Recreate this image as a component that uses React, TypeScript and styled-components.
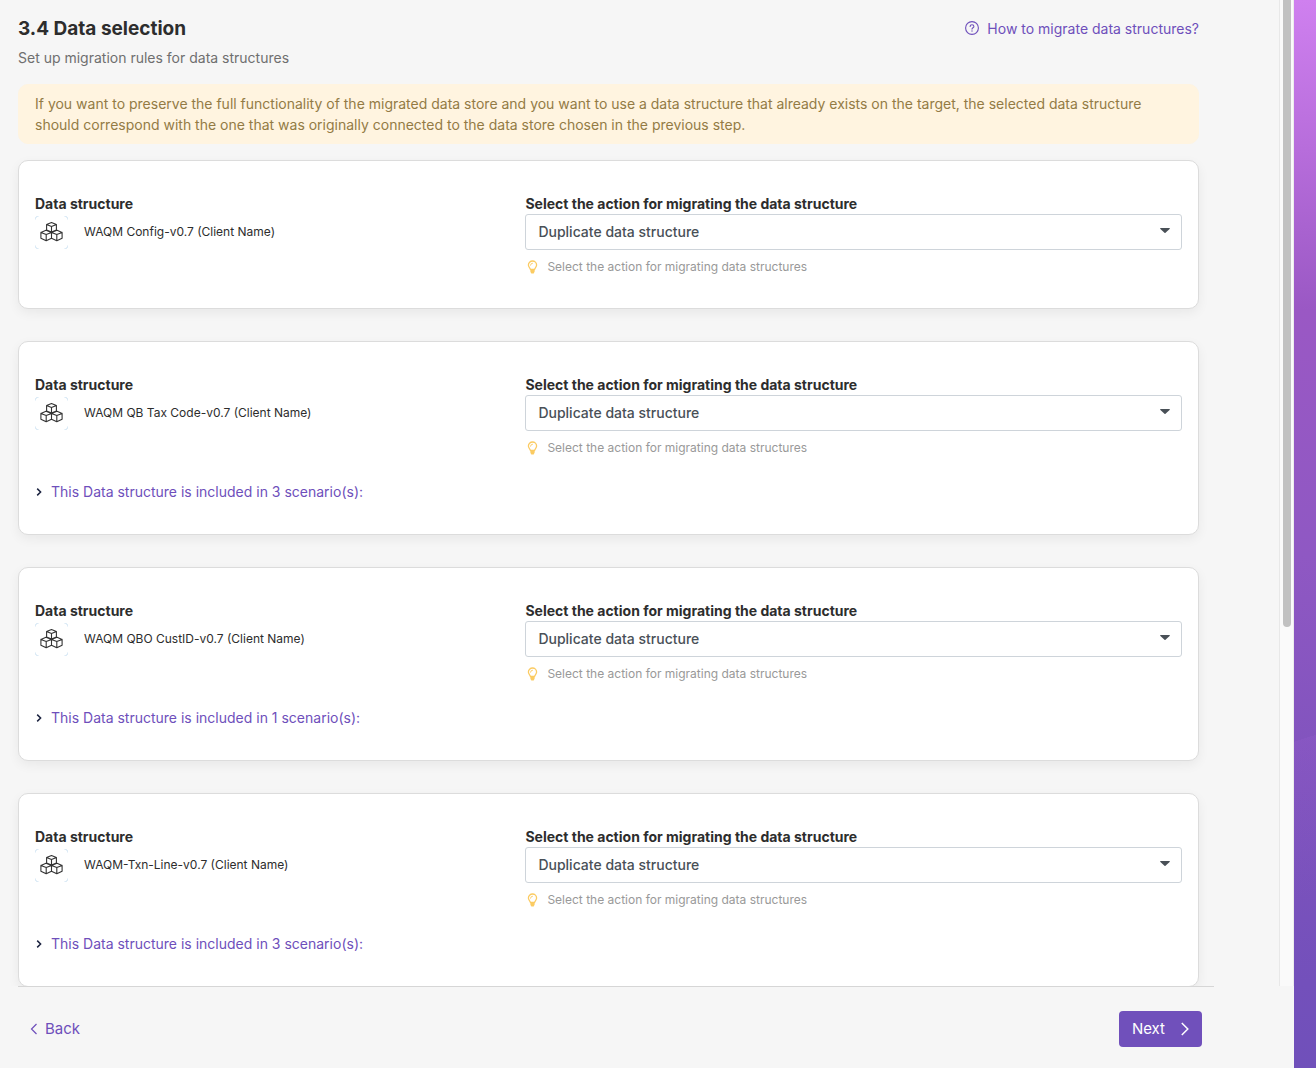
import React, { useId, useState } from "react";
import styled, { createGlobalStyle } from "styled-components";

const GlobalStyle = createGlobalStyle`
  *, *::before, *::after { box-sizing: border-box; }
  body {
    margin: 0;
    background: #f6f6f6;
    color: #2d2d2d;
    font-family: Inter, "Liberation Sans", sans-serif;
    font-size: 14px;
    line-height: 21px;
  }
  h1, p { margin: 0; }
  button, select { font-family: inherit; }
`;

const Page = styled.div`
  display: grid;
  grid-template-columns: minmax(0, 1fr) 22px;
  height: 100vh;
`;

const Wizard = styled.div`
  display: flex;
  flex-direction: column;
  min-height: 0;
`;

const Viewport = styled.div`
  flex: 1;
  min-height: 0;
  display: flex;
`;

const Content = styled.main`
  flex: 1;
  min-width: 0;
  overflow-y: auto;
  scrollbar-width: none;
  padding: 13px 80px 32px 18px;
`;

const ScrollTrack = styled.div`
  width: 15px;
  padding: 0 2px 0 3px;
  background: #fafafa;
  border-left: 1px solid #e8e8e8;
  border-right: 1px solid #ececec;
`;

const ScrollThumb = styled.div<{ $share: number }>`
  width: 8px;
  height: ${(p) => p.$share * 100}%;
  border-radius: 0 0 4px 4px;
  background: #c1c1c1;
`;

const Backdrop = styled.div`
  background:
    linear-gradient(162deg, transparent 69%, rgba(160, 100, 215, 0.16) 69%, transparent 84%),
    linear-gradient(180deg, #cf80ef 0%, #b76ddb 14%, #9a58c4 29%, #8f58c3 52%, #7f53bd 74%, #7350bb 92%, #7050ba 100%);
`;

const Header = styled.header`
  display: flex;
  justify-content: space-between;
  align-items: flex-start;
  margin-bottom: 16px;
`;

const Title = styled.h1`
  font-size: 19px;
  line-height: 32px;
  font-weight: 700;
`;

const Subtitle = styled.p`
  padding-top: 2px;
  color: #6f6f6f;
`;

const HelpLink = styled.a`
  display: flex;
  align-items: center;
  gap: 8px;
  line-height: 32px;
  color: #6e4fbb;
  text-decoration: none;
`;

const Notice = styled.p`
  && { margin-bottom: 16px; }
  padding: 8px 16px;
  border: 1px solid #fff4e0;
  border-radius: 10px;
  background: #fff4e0;
  color: #937b45;
`;

const CardList = styled.div`
  display: flex;
  flex-direction: column;
  gap: 32px;
`;

const Card = styled.section`
  padding: 32px 16px;
  border: 1px solid #dcdcdc;
  border-radius: 10px;
  background: #fff;
  box-shadow: 0 4px 12px rgba(0, 0, 0, 0.06);
`;

const Columns = styled.div`
  display: grid;
  grid-template-columns: repeat(12, minmax(0, 1fr));
  column-gap: 30px;
`;

const Column = styled.div<{ $span: number }>`
  grid-column: span ${(p) => p.$span};
`;

const Caption = styled.div`
  font-weight: 700;
`;

const FieldLabel = styled.label`
  display: block;
  font-weight: 700;
`;

const Structure = styled.div`
  display: flex;
  align-items: flex-start;
  gap: 16px;
  padding-top: 2px;
  font-size: 12px;
  line-height: 32px;
`;

const SelectBox = styled.div`
  position: relative;
`;

const Select = styled.select`
  display: block;
  width: 100%;
  height: 36px;
  padding: 0 36px 2px 12px;
  border: 1px solid #ced4da;
  border-radius: 3px;
  background: #fff;
  color: #495057;
  font-size: 14px;
  font-weight: 500;
  appearance: none;
`;

const Caret = styled.svg`
  position: absolute;
  top: 14px;
  right: 12px;
  pointer-events: none;
`;

const Hint = styled.p`
  && { margin-top: 8px; }
  display: flex;
  align-items: center;
  gap: 8px;
  color: #999;
  font-size: 12px;
  line-height: 18px;
`;

const Disclosure = styled.button`
  display: flex;
  align-items: center;
  gap: 8px;
  margin-top: 24px;
  padding: 0;
  border: 0;
  background: none;
  color: #6e4fbb;
  font-size: 14px;
  line-height: 21px;
  cursor: pointer;
`;

const Arrow = styled.svg<{ $open: boolean }>`
  transform: ${(p) => (p.$open ? "rotate(90deg)" : "none")};
`;

const Footer = styled.footer`
  display: flex;
  justify-content: space-between;
  align-items: center;
  margin: 0 80px 0 18px;
  padding: 24px 12px 21px;
  border-top: 1px solid #d6d6d6;
`;

const BackButton = styled.button`
  display: flex;
  align-items: center;
  gap: 7px;
  padding: 0;
  border: 0;
  background: none;
  color: #6e4fbb;
  font-size: 15px;
  line-height: 24px;
  cursor: pointer;
`;

const NextButton = styled.button`
  display: flex;
  align-items: center;
  gap: 16px;
  height: 36px;
  padding: 0 13px 1px;
  border: 0;
  border-radius: 4px;
  background: #7050bb;
  color: #fff;
  font-size: 15px;
  line-height: 24px;
  cursor: pointer;
`;

const QuestionIcon = () => (
  <svg width="14" height="16" viewBox="0 0 14 16" fill="none" stroke="currentColor" strokeLinecap="round" strokeLinejoin="round" aria-hidden="true">
    <circle cx="7" cy="7" r="6.4" strokeWidth="1.1" />
    <path d="M5.1 5.4C5.2 4.3 6 3.7 7 3.7s1.9.7 1.9 1.7c0 1.3-1.9 1.4-1.9 2.7" strokeWidth="1.1" />
    <circle cx="7" cy="10" r=".7" fill="currentColor" stroke="none" />
  </svg>
);

const CubesIcon = () => (
  <svg width="33" height="33" viewBox="0 0 33 33" fill="none" strokeLinejoin="round" strokeLinecap="round" aria-hidden="true">
    <path d="M.5 3v-.5a2 2 0 0 1 2-2H3M30 .5h.5a2 2 0 0 1 2 2V3M.5 30v.5a2 2 0 0 0 2 2H3M30 32.5h.5a2 2 0 0 0 2-2V30" stroke="#cfe3f2" />
    <path
      d="M16.5 6.6l4.9 1.9v5.4l-4.9 2.2-4.9-2.2V8.5zM11.6 8.5l4.9 2 4.9-2M16.5 10.5v5.6M11 14.2l5.5 2.2v5.9l-5.3 2.5-5.3-2.5v-5.9zM5.9 16.4l5.3 2.2 5.3-2.2M11.2 18.6v6.2M22 14.2l5.1 2.2v5.9l-5.3 2.5-5.3-2.5M16.5 16.4l5.3 2.2 5.3-2.2M16.5 16.4L22 14.2M21.8 18.6v6.2"
      stroke="#333"
      strokeWidth="1.1"
    />
  </svg>
);

const BulbIcon = () => (
  <svg width="14" height="14" viewBox="0 0 14 14" aria-hidden="true">
    <path d="M7.5 1a4.1 4.1 0 0 0-4.1 4.1c0 1.9 1.6 2.6 2.1 4.4h4c.5-1.8 2.1-2.5 2.1-4.4A4.1 4.1 0 0 0 7.5 1z" fill="none" stroke="#fbcb62" strokeWidth="1.3" />
    <path d="M5.4 9h4.2v2.7l-.9 1.7H6.3l-.9-1.7z" fill="#fbcb62" />
    <path d="M5.5 5.2a2 2 0 0 1 2-2" fill="none" stroke="#fbcb62" strokeWidth=".9" strokeLinecap="round" />
  </svg>
);

interface DataStructure {
  name: string;
  scenarios: number;
}

const structures: DataStructure[] = [
  { name: "WAQM Config-v0.7 (Client Name)", scenarios: 0 },
  { name: "WAQM QB Tax Code-v0.7 (Client Name)", scenarios: 3 },
  { name: "WAQM QBO CustID-v0.7 (Client Name)", scenarios: 1 },
  { name: "WAQM-Txn-Line-v0.7 (Client Name)", scenarios: 3 },
];

function StructureCard({ name, scenarios }: DataStructure) {
  const id = useId();
  const [open, setOpen] = useState(false);
  return (
    <Card>
      <Columns>
        <Column $span={5}>
          <Caption>Data structure</Caption>
          <Structure>
            <CubesIcon />
            <span>{name}</span>
          </Structure>
        </Column>
        <Column $span={7}>
          <FieldLabel htmlFor={id}>Select the action for migrating the data structure</FieldLabel>
          <SelectBox>
            <Select id={id} defaultValue="duplicate">
              <option value="duplicate">Duplicate data structure</option>
            </Select>
            <Caret width="10" height="6" viewBox="0 0 10 6" aria-hidden="true">
              <path d="M.8 0h8.4a.5.5 0 0 1 .4.9L5.5 4.8a.7.7 0 0 1-1 0L.4.9A.5.5 0 0 1 .8 0z" fill="#495057" />
            </Caret>
          </SelectBox>
          <Hint>
            <BulbIcon />
            Select the action for migrating data structures
          </Hint>
        </Column>
      </Columns>
      {scenarios > 0 && (
        <Disclosure type="button" aria-expanded={open} onClick={() => setOpen(!open)}>
          <Arrow $open={open} width="8" height="8" viewBox="0 0 8 8" fill="none" stroke="#1c2340" strokeWidth="1.5" aria-hidden="true">
            <path d="M2.2.6L5.6 4 2.2 7.4" />
          </Arrow>
          {`This Data structure is included in ${scenarios} scenario(s):`}
        </Disclosure>
      )}
    </Card>
  );
}

export default function App() {
  return (
    <>
      <GlobalStyle />
      <Page>
        <Wizard>
          <Viewport>
            <Content>
              <Header>
                <div>
                  <Title>3.4 Data selection</Title>
                  <Subtitle>Set up migration rules for data structures</Subtitle>
                </div>
                <HelpLink href="#help">
                  <QuestionIcon />
                  How to migrate data structures?
                </HelpLink>
              </Header>
              <Notice>
                If you want to preserve the full functionality of the migrated data store and you want to use a data
                structure that already exists on the target, the selected data structure should correspond with the one
                that was originally connected to the data store chosen in the previous step.
              </Notice>
              <CardList>
                {structures.map((s) => (
                  <StructureCard key={s.name} {...s} />
                ))}
              </CardList>
            </Content>
            <ScrollTrack>
              <ScrollThumb $share={7 / 11} />
            </ScrollTrack>
          </Viewport>
          <Footer>
            <BackButton type="button">
              <svg width="8" height="12" viewBox="0 0 8 12" fill="none" stroke="currentColor" strokeWidth="1.2" aria-hidden="true">
                <path d="M6.5 1l-5 5 5 5" />
              </svg>
              Back
            </BackButton>
            <NextButton type="button">
              Next
              <svg width="8" height="14" viewBox="0 0 8 14" fill="none" stroke="currentColor" strokeWidth="1.5" aria-hidden="true">
                <path d="M.8 1l6 6-6 6" />
              </svg>
            </NextButton>
          </Footer>
        </Wizard>
        <Backdrop />
      </Page>
    </>
  );
}
